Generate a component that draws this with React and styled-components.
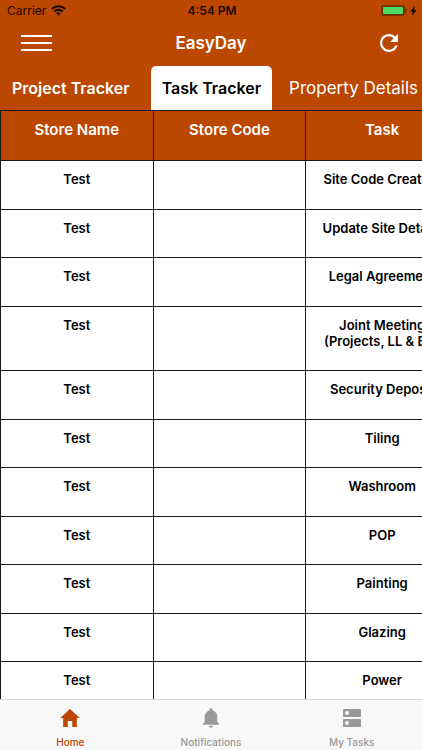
import React from "react";
import styled, { createGlobalStyle } from "styled-components";
import { MdDns } from "react-icons/md";
import { IoMdHome, IoMdNotifications, IoMdRefresh } from "react-icons/io";

const GlobalStyle = createGlobalStyle`
  * {
    box-sizing: border-box;
  }
  body {
    margin: 0;
    font-family: Inter, "Liberation Sans", sans-serif;
    background-color: #fff;
  }
  button {
    border: none;
    padding: 0;
    background: none;
    font-family: inherit;
    cursor: pointer;
  }
`;

const Screen = styled.div`
  display: flex;
  flex-direction: column;
  height: 100vh;
  overflow: hidden;
`;

const Top = styled.header`
  background-color: #bb4700;
  color: #fff;
`;

const StatusBar = styled.div`
  display: grid;
  grid-template-columns: 1fr auto 1fr;
  align-items: center;
  height: 22px;
  padding: 0 5px 1px 7px;
  color: #1c0a00;
  font-size: 12px;
`;

const StatusSide = styled.div`
  display: flex;
  align-items: center;
  justify-content: ${(props) => (props.$end ? "flex-end" : "flex-start")};
  gap: ${(props) => (props.$end ? 3 : 5)}px;
`;

const Clock = styled.span`
  font-weight: 600;
`;

const NavBar = styled.div`
  display: flex;
  justify-content: space-between;
  align-items: center;
  height: 44px;
  padding: 0 20px 2px;

  h1 {
    margin: 0;
    font-size: 17px;
    font-weight: 600;
  }
`;

const IconButton = styled.button`
  display: flex;
  justify-content: ${(props) => (props.$end ? "flex-end" : "flex-start")};
  width: 32px;
  color: #fff;
`;

const TabList = styled.nav`
  display: flex;
  height: 44px;
  overflow: hidden;
`;

const Tab = styled.button`
  flex: none;
  padding: 0 ${(props) => (props.$active ? 11 : 12)}px;
  margin-right: ${(props) => (props.$active ? 5 : 9)}px;
  border-radius: 5px 5px 0 0;
  background-color: ${(props) => (props.$active ? "#fff" : "transparent")};
  color: ${(props) => (props.$active ? "#000" : "#fff")};
  font-size: ${(props) => (props.$light ? 17 : 16)}px;
  font-weight: ${(props) => (props.$light ? 400 : 600)};
`;

const TableArea = styled.main`
  flex: 1;
  min-height: 0;
  overflow: auto;
  scrollbar-width: none;
`;

const Table = styled.table`
  width: 459px;
  table-layout: fixed;
  border-collapse: collapse;
  text-align: center;
`;

const HeadCell = styled.th`
  height: 50px;
  padding: 10px 12px 0;
  border: 1px solid #1a1a1a;
  background-color: #bb4700;
  color: #fff;
  font-size: 15px;
  font-weight: 600;
  line-height: 18px;
  vertical-align: top;
`;

const Row = styled.tr`
  height: 49px;

  &:nth-child(even) {
    height: 48px;
  }
`;

const Cell = styled.td`
  padding: 10px 12px 21px;
  border: 1px solid #1a1a1a;
  font-size: 13px;
  font-weight: 600;
  line-height: 16px;
  white-space: pre;
  vertical-align: top;
`;

const BottomBar = styled.nav`
  display: flex;
  height: 51px;
  border-top: 1px solid #d5d5d5;
  background-color: #f8f8f8;
`;

const BottomItem = styled.button`
  flex: 1;
  display: flex;
  flex-direction: column;
  align-items: center;
  justify-content: flex-end;
  gap: 6px;
  padding-bottom: 2px;
  color: ${(props) => (props.$active ? "#bb4700" : "#999")};
  font-size: 10px;
  font-weight: 500;
  line-height: 12px;
`;

const tabs = [
  { name: "Project Tracker" },
  { name: "Task Tracker" },
  { name: "Property Details", light: true },
];

const tasks = [
  "Site Code Creation",
  "Update Site Details",
  "Legal Agreement",
  "Joint Meeting\n(Projects, LL & BD)",
  "Security Deposit",
  "Tiling",
  "Washroom",
  "POP",
  "Painting",
  "Glazing",
  "Power",
];

const rows = tasks.map((task) => ({ storeName: "Test", storeCode: "", task }));

const bottomItems = [
  { name: "Home", icon: <IoMdHome size={24} /> },
  { name: "Notifications", icon: <IoMdNotifications size={24} /> },
  { name: "My Tasks", icon: <MdDns size={24} /> },
];

const WifiIcon = () => (
  <svg width="15" height="11" viewBox="0 0 14 10" fill="none" stroke="currentColor" strokeWidth="2">
    <path d="M0.8 3.6a8.8 8.8 0 0 1 12.4 0" />
    <path d="M3.1 6a5.5 5.5 0 0 1 7.8 0" />
    <path d="M7 9.8 4.9 7.7a3 3 0 0 1 4.2 0z" fill="currentColor" stroke="none" />
  </svg>
);

const BatteryIcon = () => (
  <svg width="26" height="11" viewBox="0 0 26 11">
    <rect x="0.5" y="0.5" width="23" height="10" rx="2" fill="#6b3500" stroke="#7a3000" />
    <rect x="2" y="2" width="20" height="7" rx="1" fill="#4cd964" />
    <path d="M24.5 3.5c1.6 .6 1.6 3.4 0 4z" fill="#5f2400" />
  </svg>
);

const BoltIcon = () => (
  <svg width="7" height="10" viewBox="0 0 7 10">
    <path d="M4.8 0 0.2 5.8h2.5L1.8 10l4.9-6H4.1z" fill="currentColor" />
  </svg>
);

const MenuIcon = () => (
  <svg width="32" height="18" viewBox="0 0 32 18" stroke="currentColor" strokeWidth="2">
    <path d="M1 2h31M1 9h31M1 16h31" />
  </svg>
);

class App extends React.Component {
  state = {
    tab: "Task Tracker",
    page: "Home",
  };

  changeTab = (tab) => {
    this.setState({ tab: tab });
  };

  changePage = (page) => {
    this.setState({ page: page });
  };

  render() {
    return (
      <Screen>
        <GlobalStyle />
        <Top>
          <StatusBar>
            <StatusSide>
              <span>Carrier</span>
              <WifiIcon />
            </StatusSide>
            <Clock>4:54 PM</Clock>
            <StatusSide $end>
              <BatteryIcon />
              <BoltIcon />
            </StatusSide>
          </StatusBar>
          <NavBar>
            <IconButton aria-label="Menu"><MenuIcon /></IconButton>
            <h1>EasyDay</h1>
            <IconButton $end aria-label="Refresh"><IoMdRefresh size={26} /></IconButton>
          </NavBar>
          <TabList>
            {tabs.map((tab) => (
              <Tab
                key={tab.name}
                $active={this.state.tab === tab.name}
                $light={tab.light}
                onClick={() => this.changeTab(tab.name)}
              >
                {tab.name}
              </Tab>
            ))}
          </TabList>
        </Top>
        <TableArea>
          <Table>
            <thead>
              <tr>
                <HeadCell scope="col">Store Name</HeadCell>
                <HeadCell scope="col">Store Code</HeadCell>
                <HeadCell scope="col">Task</HeadCell>
              </tr>
            </thead>
            <tbody>
              {rows.map((row) => (
                <Row key={row.task}>
                  <Cell>{row.storeName}</Cell>
                  <Cell>{row.storeCode}</Cell>
                  <Cell>{row.task}</Cell>
                </Row>
              ))}
            </tbody>
          </Table>
        </TableArea>
        <BottomBar>
          {bottomItems.map((item) => (
            <BottomItem
              key={item.name}
              $active={this.state.page === item.name}
              onClick={() => this.changePage(item.name)}
            >
              {item.icon}
              {item.name}
            </BottomItem>
          ))}
        </BottomBar>
      </Screen>
    );
  }
}

export default App;
